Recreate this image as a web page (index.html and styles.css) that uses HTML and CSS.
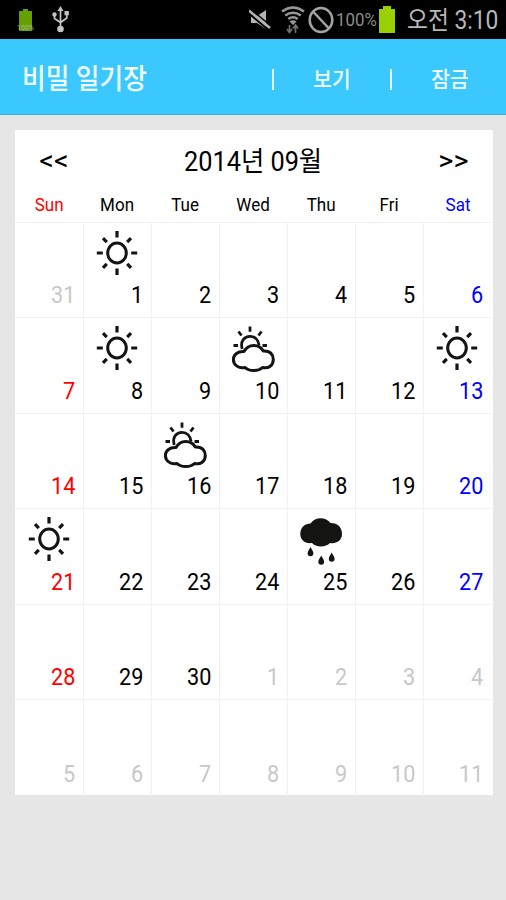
FILE: index.html
```html
<!DOCTYPE html>
<html lang="ko">
<head>
<meta charset="utf-8">
<title>비밀 일기장</title>
<link rel="stylesheet" href="styles.css">
</head>
<body>
<svg class="defs" aria-hidden="true">
  <symbol id="sun" viewBox="0 0 46 46">
    <ellipse cx="23" cy="23" rx="9.300" ry="10" fill="none" stroke="#141414" stroke-width="3"/>
    <path d="M23 1v6.500M23 38.500V45M2.800 23h6M37.200 23h6M9 8.200l3.800 3.900M37 8.200l-3.800 3.900M9 37.800l3.800-3.900M37 37.800l-3.800-3.900" fill="none" stroke="#141414" stroke-width="3.200"/>
  </symbol>
  <symbol id="cloudy" viewBox="0 0 46 48">
    <path d="M12.200 24C10 16 14.500 11.300 20 11.300c4.800 0 8.300 3.500 9 9" fill="none" stroke="#141414" stroke-width="2.800"/>
    <path d="M20 1.500v5.300M8.500 6.500l3 4M31.500 6.500l-3 4M3.500 20.500h4.500M32.500 20.500h4.500" fill="none" stroke="#141414" stroke-width="2.800"/>
    <path d="M14 26.500C18.500 18.500 29 18.500 33.300 26C40.500 25.500 43.300 30 43.300 34.500C43.300 40.500 38.500 44 32.500 42.500C28.500 46.500 19 46.500 15 42.500C9 44 3.400 40 3.400 34.500C3.400 29.500 8 26 14 26.500Z" fill="#fff" stroke="#141414" stroke-width="3" stroke-linejoin="round"/>
  </symbol>
  <symbol id="rain" viewBox="0 0 46 50">
    <path d="M12.500 7.500C17 .5 28 .5 32.500 7C40 7 44 11.500 44 18C44 24.500 38.500 28 32 27C28 31.500 17.500 31.500 14 27C7 28 2.300 24 2.300 18C2.300 11.500 7 7.500 12.500 7.500Z" fill="#141412"/>
    <path d="M12.500 31c1.500 3 2.900 4.500 2.900 6.300a2.900 2.900 0 0 1-5.800 0c0-1.800 1.400-3.300 2.900-6.300zM23.200 39.500c1.500 3 2.900 4.500 2.900 6.300a2.900 2.900 0 0 1-5.800 0c0-1.800 1.400-3.300 2.900-6.300zM33.700 36.500c1.500 3 2.900 4.500 2.900 6.300a2.900 2.900 0 0 1-5.800 0c0-1.800 1.400-3.300 2.900-6.300z" fill="#141412"/>
  </symbol>
</svg>

<div class="status">
  <svg class="low-battery" viewBox="0 0 18 24"><path d="M6 1h5v2h4v20H2V3h4z" fill="#64a000"/><text x="8.500" y="21.500" class="tiny">100%</text></svg>
  <svg class="usb" viewBox="0 0 18 27"><g fill="none" stroke="#c4c4c4" stroke-width="1.700"><path d="M8.500 4v18M2.500 9v3.500l6 4M14.800 7v5l-6.300 4.500"/></g><g fill="#c4c4c4"><path d="M8.500 0l3 5h-6z"/><circle cx="2.500" cy="8.500" r="2.200"/><path d="M12.500 5h4.300v4.300h-4.300z"/><circle cx="8.500" cy="23" r="3.300"/></g></svg>
  <svg class="mute" viewBox="0 0 22 22"><path d="M2 7h6l9-6v19l-9-6H2z" fill="#b5b5b5"/><path d="M0 4.500l19 16" stroke="#000" stroke-width="2"/><path d="M0 1.500l21 17.500" stroke="#b5b5b5" stroke-width="2.500"/><path d="M1.500 0l20 16.500" stroke="#000" stroke-width="1.500"/></svg>
  <svg class="wifi" viewBox="0 0 24 28"><g fill="none" stroke="#989898" stroke-width="2.500"><path d="M1 5.500q11-8 22 0M4.200 9.500q7.800-5.500 15.600 0M7.300 13q4.700-3.500 9.400 0"/></g><path d="M8.500 15.500q3.500-2.500 7 0L12 19z" fill="#989898"/><path d="M8.500 19v7M6 23l2.500 3.500L11 23M14.500 27v-7M12 22.500l2.500-3.500 2.500 3.500" fill="none" stroke="#707070" stroke-width="1.700"/></svg>
  <svg class="blocked" viewBox="0 0 26 28"><g fill="none" stroke="#a4a4a4" stroke-width="2.500"><ellipse cx="13" cy="14" rx="11.300" ry="12"/><path d="M5 5.500l16 17"/></g></svg>
  <span class="percent">100%</span>
  <svg class="battery" viewBox="0 0 18 28"><path d="M5 0h8v3h4v24H1V3h4z" fill="#98d000"/></svg>
  <span class="clock">오전 3:10</span>
</div>

<header class="bar">
  <h1>비밀 일기장</h1>
  <i class="sep"></i>
  <span class="action">보기</span>
  <i class="sep"></i>
  <span class="action">잠금</span>
</header>

<main class="card">
  <div class="month">
    <span class="nav">&lt;&lt;</span>
    <span class="label">2014년 09월</span>
    <span class="nav">&gt;&gt;</span>
  </div>
  <div class="week">
    <span class="red">Sun</span><span>Mon</span><span>Tue</span><span>Wed</span><span>Thu</span><span>Fri</span><span class="blue">Sat</span>
  </div>
  <div class="days">
    <div class="off"><b>31</b></div>
    <div><svg class="sun"><use href="#sun"/></svg><b>1</b></div>
    <div><b>2</b></div>
    <div><b>3</b></div>
    <div><b>4</b></div>
    <div><b>5</b></div>
    <div class="blue"><b>6</b></div>

    <div class="red"><b>7</b></div>
    <div><svg class="sun"><use href="#sun"/></svg><b>8</b></div>
    <div><b>9</b></div>
    <div><svg class="cloudy"><use href="#cloudy"/></svg><b>10</b></div>
    <div><b>11</b></div>
    <div><b>12</b></div>
    <div class="blue"><svg class="sun"><use href="#sun"/></svg><b>13</b></div>

    <div class="red"><b>14</b></div>
    <div><b>15</b></div>
    <div><svg class="cloudy"><use href="#cloudy"/></svg><b>16</b></div>
    <div><b>17</b></div>
    <div><b>18</b></div>
    <div><b>19</b></div>
    <div class="blue"><b>20</b></div>

    <div class="red"><svg class="sun"><use href="#sun"/></svg><b>21</b></div>
    <div><b>22</b></div>
    <div><b>23</b></div>
    <div><b>24</b></div>
    <div><svg class="rain"><use href="#rain"/></svg><b>25</b></div>
    <div><b>26</b></div>
    <div class="blue"><b>27</b></div>

    <div class="red"><b>28</b></div>
    <div><b>29</b></div>
    <div><b>30</b></div>
    <div class="off"><b>1</b></div>
    <div class="off"><b>2</b></div>
    <div class="off"><b>3</b></div>
    <div class="off"><b>4</b></div>

    <div class="off"><b>5</b></div>
    <div class="off"><b>6</b></div>
    <div class="off"><b>7</b></div>
    <div class="off"><b>8</b></div>
    <div class="off"><b>9</b></div>
    <div class="off"><b>10</b></div>
    <div class="off"><b>11</b></div>
  </div>
</main>
</body>
</html>
```
FILE: styles.css
```css
* { box-sizing: border-box; }
body {
  margin: 0;
  height: 900px;
  overflow: hidden;
  background: #e6e6e6;
  color: #000;
  font-family: Roboto, "Noto Sans CJK KR", sans-serif;
}
svg { display: block; flex: none; }
.defs { position: absolute; width: 0; height: 0; }

.status {
  display: flex;
  align-items: center;
  height: 39px;
  padding: 0 7px 0 17px;
  background: #000;
  color: #b8b8b8;
  white-space: nowrap;
}
.low-battery { width: 18px; height: 24px; }
.tiny { font-size: 7px; fill: #a8b890; text-anchor: middle; }
.usb { width: 18px; height: 27px; margin-left: 17px; }
.mute { width: 22px; height: 22px; margin-left: auto; }
.wifi { width: 24px; height: 28px; margin-left: 10px; }
.blocked { width: 26px; height: 28px; margin-left: 3px; }
.percent { width: 42px; margin-left: 2px; color: #8c8c8c; font-size: 18.500px; line-height: 38px; }
.battery { width: 18px; height: 28px; margin-left: 0; }
.clock { width: 92px; margin-left: 11px; padding-top: 2px; font-size: 25px; line-height: 38px; }
.percent, .clock { transform: scaleX(.91); transform-origin: left; }

.bar {
  display: flex;
  align-items: center;
  height: 76px;
  padding-left: 22px;
  background: #3bc8ff;
  border-bottom: 1px solid #38aedb;
  color: #f0fcff;
}
h1 {
  flex: none;
  margin: 0;
  padding-top: 7px;
  width: 250px;
  font-size: 28px;
  font-weight: 500;
  line-height: 40px;
  transform: scaleX(.92);
  transform-origin: left;
}
.sep { flex: none; width: 2px; height: 21px; margin-top: 5px; background: #e4f8ff; }
.action {
  flex: none;
  width: 116px;
  font-size: 22px;
  font-weight: 500;
  text-align: center;
  transform: scaleX(.92);
}

.card { width: 478px; height: 665px; margin: 15px 0 0 14.500px; background: #fff; }
.month { display: flex; justify-content: space-between; height: 62px; padding: 0 25px; line-height: 61px; }
.nav { font-size: 27.500px; transform: scaleX(1.050); }
.label { font-size: 27.500px; line-height: 64px; transform: scaleX(.92); }
.week { display: grid; grid-template-columns: repeat(7, 68.200px); height: 29.500px; text-align: center; font-size: 18.500px; line-height: 26px; }
.week span { transform: scaleX(.92); }
.red { color: #f00; }
.blue { color: #00f; }
.off { color: #c8c8c8; }
.days { display: grid; grid-template: repeat(6, 95.500px) / 69px repeat(6, 68px); border-top: 1px solid #f1f1f1; }
.days > div {
  display: flex;
  flex-direction: column;
  align-items: center;
  border-right: 1px solid #f1f1f1;
  border-bottom: 1px solid #f1f1f1;
  padding: 7px 7px 0 0;
}
.days > div:nth-child(7n) { border-right-color: #fff; }
.days > div:nth-last-child(-n+7) { border-bottom: 0; }
.days b {
  align-self: flex-end;
  margin: auto 0 8px;
  font-size: 23.500px;
  font-weight: 400;
  line-height: 28px;
  transform: scaleX(.92);
  transform-origin: right;
}
.days svg { margin-right: -7px; overflow: visible; }
.sun { width: 46px; height: 46px; }
.cloudy { width: 46px; height: 48px; }
.rain { width: 46px; height: 50px; }
```
